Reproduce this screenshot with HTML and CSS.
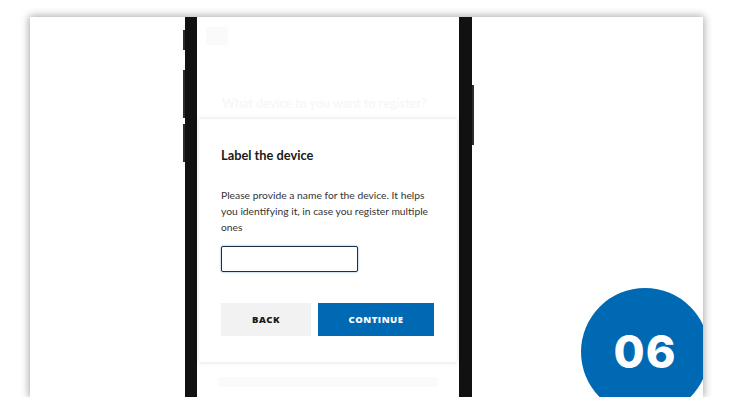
FILE: index.html
```html
<!DOCTYPE html>
<html lang="en">
<head>
    <title>Step 06: Label the device</title>
    <link rel="stylesheet" href="styles.css">
</head>
<body>
    <div class="slide">
        <div class="phone">
            <span class="side-btn left b1"></span>
            <span class="side-btn left b2"></span>
            <span class="side-btn left b3"></span>
            <span class="side-btn right b4"></span>
            <div class="screen">
                <div class="behind">
                    <div class="logo"></div>
                    <h2 class="faded-title">What device to you want to register?</h2>
                </div>
                <div class="dialog">
                    <h1>Label the device</h1>
                    <p>Please provide a name for the device. It helps you identifying it, in case you register multiple ones</p>
                    <input type="text" class="name-input">
                    <div class="actions">
                        <button class="btn back">BACK</button>
                        <button class="btn continue">CONTINUE</button>
                    </div>
                </div>
                <div class="behind-strip"></div>
            </div>
        </div>
        <div class="step">06</div>
    </div>
</body>
</html>
```

FILE: styles.css
```css
body {
    margin: 0;
    background: #fff;
    font-family: Lato, "Noto Sans", sans-serif;
}
.slide {
    position: relative;
    width: 673px;
    height: 380px;
    margin: 17px 0 0 30px;
    background: #fff;
    box-shadow: 0 0 8px 1px rgba(0, 0, 0, 0.35);
    overflow: hidden;
}
.phone {
    position: relative;
    width: 262px;
    height: 100%;
    margin-left: 155px;
    border-left: 12px solid #111;
    border-right: 13px solid #111;
}
.side-btn {
    position: absolute;
    width: 2px;
    background: #2c2c30;
}
.side-btn.left {
    left: -14px;
}
.side-btn.right {
    right: -15px;
}
.b1 { top: 13px; height: 20px; }
.b2 { top: 53px; height: 48px; }
.b3 { top: 107px; height: 38px; }
.b4 { top: 68px; height: 60px; }
.screen {
    height: 100%;
    background: #fff;
}
.behind {
    height: 102px;
    padding: 10px 0 0 9px;
    box-sizing: border-box;
}
.logo {
    width: 22px;
    height: 18px;
    background: #fafafa;
}
.faded-title {
    margin: 51px 0 0 16px;
    font-size: 12.5px;
    font-weight: 700;
    color: #f7f7f7;
}
.dialog {
    margin: 0 2px;
    padding: 28px 22px 26px;
    background: #fff;
    box-shadow: 0 0 5px rgba(0, 0, 0, 0.13);
}
.dialog h1 {
    margin: 0;
    font-size: 12.8px;
    line-height: 16px;
    font-weight: 700;
    color: #1a1a1a;
}
.dialog p {
    margin: 24px 0 0;
    font-size: 10.3px;
    line-height: 16px;
    color: #333;
}
.name-input {
    display: block;
    width: 137px;
    height: 26px;
    margin-top: 11px;
    box-sizing: border-box;
    border: 1.5px solid #1d2f4f;
    border-radius: 2px;
    box-shadow: 0 0 2px #5b9bd5;
    outline: none;
}
.actions {
    display: flex;
    gap: 7px;
    margin-top: 31px;
}
.btn {
    height: 33px;
    border: none;
    font-family: "Open Sans", sans-serif;
    font-size: 9.5px;
    font-weight: 800;
    letter-spacing: 0.5px;
}
.back {
    width: 90px;
    background: #f2f2f2;
    color: #1a1a1a;
}
.continue {
    width: 116px;
    background: #0069b4;
    color: #fff;
}
.behind-strip {
    height: 10px;
    margin: 15px 22px 0 22px;
    background: #f9fafc;
}
.step {
    position: absolute;
    left: 551px;
    top: 271px;
    width: 128px;
    height: 128px;
    border-radius: 50%;
    background: #0069b4;
    color: #fff;
    font-family: Inter, sans-serif;
    font-size: 45px;
    font-weight: 800;
    line-height: 128px;
    text-align: center;
    letter-spacing: 1px;
}
```
